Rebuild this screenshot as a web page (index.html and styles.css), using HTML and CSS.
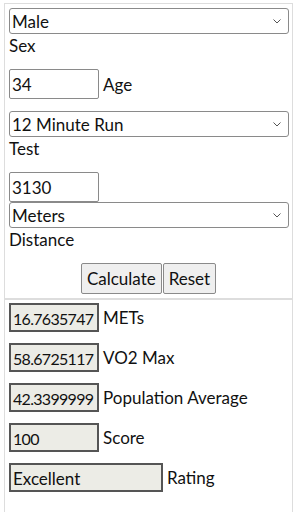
FILE: index.html
```html
<!DOCTYPE html>
<html lang="en">
<head>
    <meta charset="UTF-8">
    <meta name="viewport" content="width=device-width, initial-scale=1.0">
    <title>Fitness Test Calculator</title>
    <link rel="stylesheet" href="styles.css">
</head>
<body>
    <div class="panel form-panel">
        <div class="select-wrap">
            <select class="wide-select">
                <option>Male</option>
                <option>Female</option>
            </select>
            <svg class="chevron" width="8" height="5" viewBox="0 0 8 5"><path d="M0.5 0.5 L4 4 L7.5 0.5" fill="none" stroke="#555" stroke-width="1"/></svg>
        </div>
        <div class="field-label">Sex</div>

        <div class="inline-row age-row">
            <input class="num-input" type="text" value="34">
            <span class="inline-label">Age</span>
        </div>

        <div class="select-wrap">
            <select class="wide-select">
                <option>12 Minute Run</option>
            </select>
            <svg class="chevron" width="8" height="5" viewBox="0 0 8 5"><path d="M0.5 0.5 L4 4 L7.5 0.5" fill="none" stroke="#555" stroke-width="1"/></svg>
        </div>
        <div class="field-label">Test</div>

        <input class="num-input distance-input" type="text" value="3130">
        <div class="select-wrap">
            <select class="wide-select">
                <option>Meters</option>
                <option>Miles</option>
            </select>
            <svg class="chevron" width="8" height="5" viewBox="0 0 8 5"><path d="M0.5 0.5 L4 4 L7.5 0.5" fill="none" stroke="#555" stroke-width="1"/></svg>
        </div>
        <div class="field-label">Distance</div>

        <div class="button-row">
            <button class="action-button">Calculate</button><button class="action-button">Reset</button>
        </div>
    </div>

    <div class="panel result-panel">
        <div class="result-row">
            <output class="result-box">16.7635747</output>
            <span class="inline-label">METs</span>
        </div>
        <div class="result-row">
            <output class="result-box">58.6725117</output>
            <span class="inline-label">VO2 Max</span>
        </div>
        <div class="result-row">
            <output class="result-box">42.3399999</output>
            <span class="inline-label">Population Average</span>
        </div>
        <div class="result-row">
            <output class="result-box">100</output>
            <span class="inline-label">Score</span>
        </div>
        <div class="result-row">
            <output class="result-box rating-box">Excellent</output>
            <span class="inline-label">Rating</span>
        </div>
    </div>
</body>
</html>
```

FILE: styles.css
```css
body {
    margin: 3px 4px;
    font-family: Lato, sans-serif;
    font-size: 17px;
    color: #111;
    background: #fff;
}

.panel {
    border: 1px solid #ddd;
    padding: 4px 3px 4px 4px;
}

.form-panel {
    border-bottom: none;
    padding-bottom: 4px;
}

.result-panel {
    border-top: 2px solid #ddd;
    padding-top: 3px;
    padding-bottom: 14px;
}

select,
input,
button,
output {
    font-family: inherit;
    font-size: 17px;
    color: #111;
}

.select-wrap {
    position: relative;
    width: 280px;
}

.wide-select {
    display: block;
    width: 280px;
    height: 26px;
    margin: 0;
    padding: 0 2px;
    border: 1px solid #8a8a8a;
    border-radius: 3px;
    background: #fff;
    appearance: none;
    -webkit-appearance: none;
}

/* small chevron drawn over the select */
.chevron {
    position: absolute;
    right: 8px;
    top: 11px;
    pointer-events: none;
}

.field-label {
    line-height: 24px;
    margin-bottom: 11px;
}

.inline-row {
    display: flex;
    align-items: center;
    gap: 4px;
    margin-bottom: 12px;
}

.num-input {
    box-sizing: border-box;
    width: 90px;
    height: 30px;
    margin: 0;
    padding: 0 2px;
    border: 1px solid #8a8a8a;
    border-radius: 2px;
}

.distance-input {
    display: block;
}

.button-row {
    display: flex;
    justify-content: center;
    margin-top: 2px;
}

.action-button {
    height: 31px;
    margin: 0 1px 0 0;
    padding: 0 5px;
    border: 1px solid #8a8a8a;
    border-radius: 2px;
    background: #efefef;
}

.result-row {
    display: flex;
    align-items: center;
    gap: 4px;
    margin-bottom: 11px;
}

.result-box {
    box-sizing: border-box;
    display: block;
    width: 90px;
    height: 29px;
    padding: 1px 1px 0 2px;
    font-size: 16px;
    letter-spacing: -0.7px;
    line-height: 25px;
    border: 2px solid #555;
    background: #ecece6;
    white-space: nowrap;
    overflow: hidden;
}

.rating-box {
    width: 154px;
    letter-spacing: 0;
    font-size: 17px;
}
```
